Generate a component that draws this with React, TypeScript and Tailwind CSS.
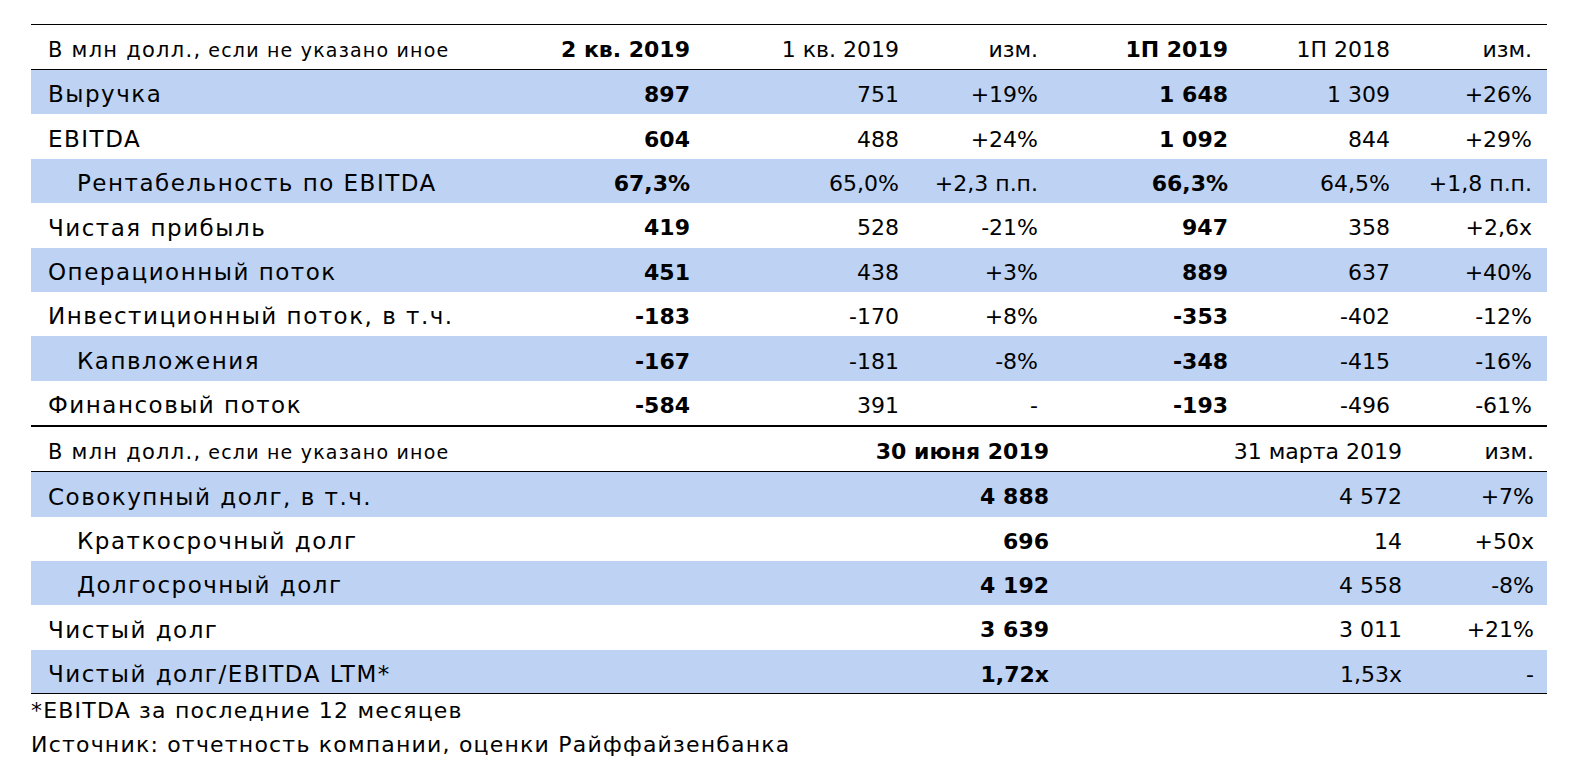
type Row = {
  label: string;
  indent?: boolean;
  blue?: boolean;
  values: string[];
};

const topRows: Row[] = [
  { label: "Выручка", blue: true, values: ["897", "751", "+19%", "1 648", "1 309", "+26%"] },
  { label: "EBITDA", values: ["604", "488", "+24%", "1 092", "844", "+29%"] },
  { label: "Рентабельность по EBITDA", indent: true, blue: true, values: ["67,3%", "65,0%", "+2,3 п.п.", "66,3%", "64,5%", "+1,8 п.п."] },
  { label: "Чистая прибыль", values: ["419", "528", "-21%", "947", "358", "+2,6x"] },
  { label: "Операционный поток", blue: true, values: ["451", "438", "+3%", "889", "637", "+40%"] },
  { label: "Инвестиционный поток, в т.ч.", values: ["-183", "-170", "+8%", "-353", "-402", "-12%"] },
  { label: "Капвложения", indent: true, blue: true, values: ["-167", "-181", "-8%", "-348", "-415", "-16%"] },
  { label: "Финансовый поток", values: ["-584", "391", "-", "-193", "-496", "-61%"] },
];

const debtRows: Row[] = [
  { label: "Совокупный долг, в т.ч.", blue: true, values: ["4 888", "4 572", "+7%"] },
  { label: "Краткосрочный долг", indent: true, values: ["696", "14", "+50x"] },
  { label: "Долгосрочный долг", indent: true, blue: true, values: ["4 192", "4 558", "-8%"] },
  { label: "Чистый долг", values: ["3 639", "3 011", "+21%"] },
  { label: "Чистый долг/EBITDA LTM*", blue: true, values: ["1,72x", "1,53x", "-"] },
];

// fixed widths so right edges land on the report's columns
const topCols = ["w-[200px]", "w-[209px]", "w-[139px]", "w-[190px]", "w-[162px]", "w-[142px]"];
const debtCols = ["w-[200px]", "w-[353px]", "w-[132px]"];

function UnitsLabel() {
  return (
    <div className="flex-1 pl-[17px] whitespace-nowrap">
      <span className="text-[21px] tracking-[1.25px]">В млн долл.,</span>{" "}
      <span className="text-[19px] tracking-[1.2px]">если не указано иное</span>
    </div>
  );
}

function DataRow({ row, cols, pr }: { row: Row; cols: string[]; pr: string }) {
  return (
    <div
      className={`flex h-[44.4px] items-center pt-[5px] text-[22px] ${pr} ${
        row.blue ? "bg-[#bed2f3]" : ""
      }`}
    >
      <div
        className={`flex-1 whitespace-nowrap text-[23px] tracking-[1.5px] ${
          row.indent ? "pl-[46px]" : "pl-[17px]"
        }`}
      >
        {row.label}
      </div>
      {row.values.map((v, i) => (
        <div
          key={i}
          className={`${cols[i]} shrink-0 text-right whitespace-nowrap ${
            (cols.length === 6 ? i % 3 === 0 : i === 0) ? "font-bold" : ""
          }`}
        >
          {v}
        </div>
      ))}
    </div>
  );
}

export default function App() {
  return (
    <div className="min-h-[768px] w-[1578px] bg-white pt-[24px] pl-[31px] text-black font-['DejaVu_Sans',sans-serif]">
      <div className="w-[1516px]">
        {/* Quarterly results */}
        <div className="border-t border-black">
          <div className="flex h-[45px] items-center border-b border-black pr-[15px] pt-[5px] text-[22px]">
            <UnitsLabel />
            <div className={`${topCols[0]} shrink-0 text-right font-bold`}>2 кв. 2019</div>
            <div className={`${topCols[1]} shrink-0 text-right`}>1 кв. 2019</div>
            <div className={`${topCols[2]} shrink-0 text-right`}>изм.</div>
            <div className={`${topCols[3]} shrink-0 text-right font-bold`}>1П 2019</div>
            <div className={`${topCols[4]} shrink-0 text-right`}>1П 2018</div>
            <div className={`${topCols[5]} shrink-0 text-right`}>изм.</div>
          </div>
          {topRows.map((r) => (
            <DataRow key={r.label} row={r} cols={topCols} pr="pr-[15px]" />
          ))}
        </div>

        {/* Debt */}
        <div className="border-t-2 border-black">
          <div className="flex h-[45px] items-center border-b border-black pr-[13px] pt-[5px] text-[22px]">
            <UnitsLabel />
            <div className={`${debtCols[0]} shrink-0 text-right font-bold`}>30 июня 2019</div>
            <div className={`${debtCols[1]} shrink-0 text-right`}>31 марта 2019</div>
            <div className={`${debtCols[2]} shrink-0 text-right`}>изм.</div>
          </div>
          {debtRows.map((r) => (
            <DataRow key={r.label} row={r} cols={debtCols} pr="pr-[13px]" />
          ))}
        </div>

        <div className="-mt-[1px] border-t border-black text-[22px] leading-[34px] tracking-[1.2px]">
          <p>*EBITDA за последние 12 месяцев</p>
          <p>Источник: отчетность компании, оценки Райффайзенбанка</p>
        </div>
      </div>
    </div>
  );
}
